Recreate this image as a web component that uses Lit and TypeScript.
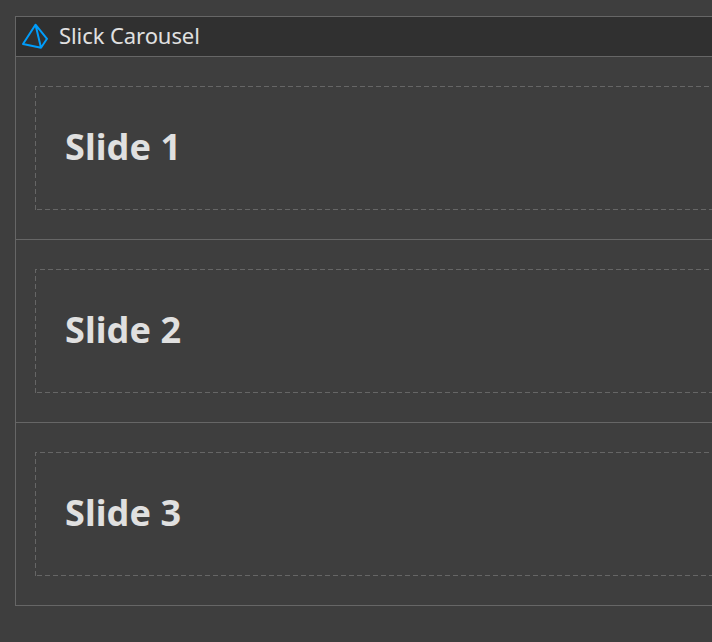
import { LitElement, html, css } from "lit";
import { customElement } from "lit/decorators.js";

@customElement("app-root")
export class AppRoot extends LitElement {
  static styles = css`
    :host { display: block; box-sizing: border-box; width: 100vw; height: 100vh; overflow: hidden; padding: 16px 0 0 15px; background: #3e3e3e; color: #e0e0e0; font-family: "Noto Sans", "Open Sans", sans-serif; }
    .widget { width: 760px; border: 1px solid #666; box-sizing: border-box; }
    .header { display: flex; align-items: center; height: 39px; padding-left: 5px; background: #303030; font-size: 22px; line-height: 37px; }
    .header svg { width: 28px; height: 28px; margin-right: 10px; flex: none; }
    .title { display: block; height: 39px; white-space: nowrap; letter-spacing: -0.08px; }
    .slide { border-top: 1px solid #666; padding: 29px 19px; height: 124px; }
    .region {
      box-sizing: border-box; height: 124px; padding: 0 30px 2px; display: flex; align-items: center;
      background:
        repeating-linear-gradient(90deg, #666 0 2px, transparent 2px 5px, #666 5px 8px) 0 0 / 100% 1px no-repeat,
        repeating-linear-gradient(90deg, transparent 0 2px, #666 2px 7px, transparent 7px 8px) 0 100% / 100% 1px no-repeat,
        repeating-linear-gradient(180deg, #666 0 4px, transparent 4px 7px, #666 7px 8px) 0 0 / 1px 100% no-repeat;
    }
    h1 { margin: 0; font-size: 36px; font-weight: 700; line-height: 48px; white-space: nowrap; letter-spacing: 0.08px; }
  `;
  render() {
    return html`<section class="widget">
      <header class="header">
        <svg viewBox="0 0 28 28" fill="none" stroke="#009dfb" stroke-width="2" stroke-linejoin="round"><path d="M14.5 1.7 L2 21 L20 24.7 L26 15.8 Z M14.5 1.7 L20 24.7"/></svg>
        <span class="title">Slick Carousel</span>
      </header>
      ${[1, 2, 3].map((n) => html`<div class="slide"><div class="region"><h1>Slide ${n}</h1></div></div>`)}
    </section>`;
  }
}
